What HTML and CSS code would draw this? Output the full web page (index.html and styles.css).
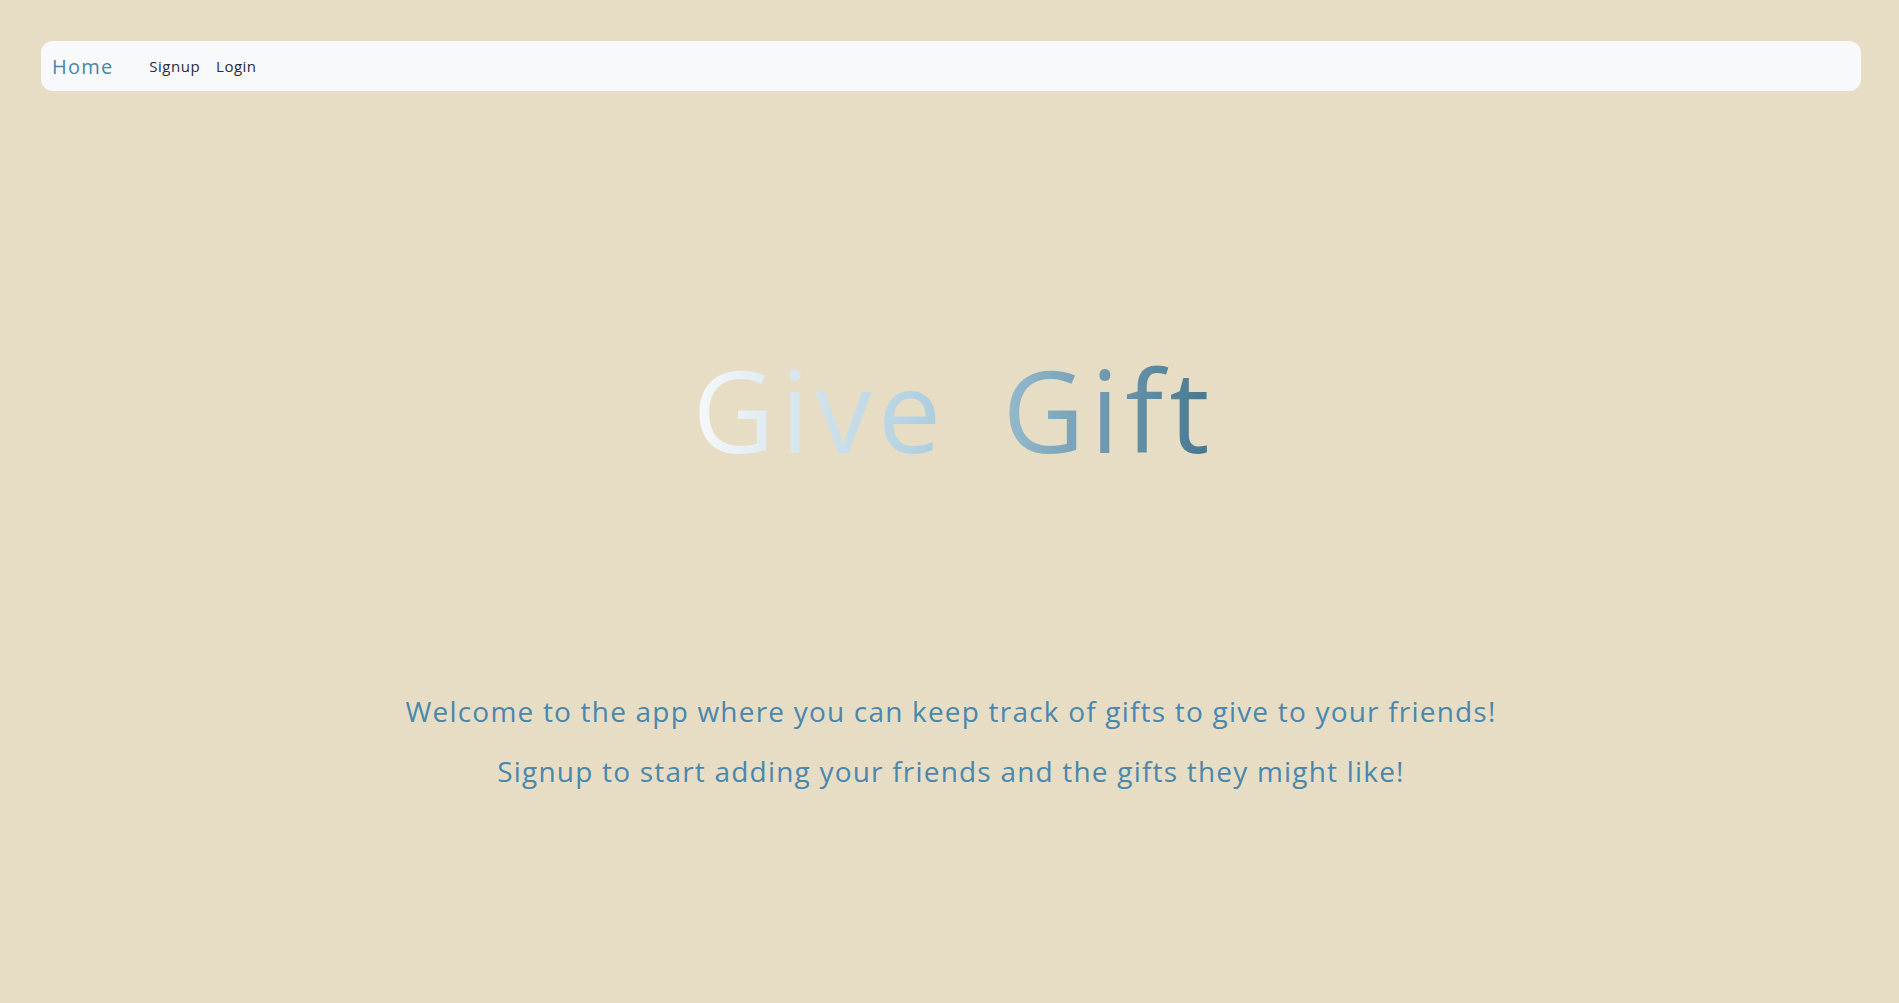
FILE: index.html
```html
<!DOCTYPE html>
<html lang="en">
<head>
<meta charset="utf-8">
<title>Give Gift</title>
<link rel="stylesheet" href="styles.css">
</head>
<body>
  <div class="page">
    <nav class="navbar">
      <a class="brand" href="#">Home</a>
      <ul class="nav-links">
        <li><a class="nav-link" href="#">Signup</a></li>
        <li><a class="nav-link" href="#">Login</a></li>
      </ul>
    </nav>
    <main class="hero">
      <h1 class="title">Give Gift</h1>
      <div class="intro">
        <p class="lead">Welcome to the app where you can keep track of gifts to give to your friends!</p>
        <p class="lead">Signup to start adding your friends and the gifts they might like!</p>
      </div>
    </main>
  </div>
</body>
</html>
```

FILE: styles.css
```css
* { box-sizing: border-box; }

html, body {
  margin: 0;
  padding: 0;
  background: #e7ddc5;
  font-family: "Open Sans", "DejaVu Sans", sans-serif;
}

.page {
  min-height: 1003px;
  padding: 41px 38px 0 41px;
}

.navbar {
  display: flex;
  align-items: center;
  height: 50px;
  padding: 0 11px;
  background: #f8f9fa;
  border-radius: 12px;
}

.brand {
  font-size: 20px;
  letter-spacing: 1.2px;
  color: #4a86a8;
  text-decoration: none;
  margin-right: 28px;
}

.nav-links {
  display: flex;
  list-style: none;
  margin: 0;
  padding: 0;
}

.nav-link {
  display: block;
  padding: 0 8px;
  font-size: 15px;
  letter-spacing: 0.5px;
  color: #2b2a3b;
  text-decoration: none;
}

.hero {
  display: flex;
  flex-direction: column;
  align-items: center;
}

.title {
  display: inline-block;
  margin: 262px 0 0 0;
  padding-left: 6px;
  font-size: 113px;
  font-weight: 400;
  line-height: 1;
  letter-spacing: 6px;
  word-spacing: 20px;
  background: linear-gradient(to right, #f8fafb 0%, #a8cbdc 50%, #45768f 100%);
  -webkit-background-clip: text;
  background-clip: text;
  color: transparent;
}

.intro {
  display: flex;
  flex-direction: column;
  align-items: center;
  gap: 26px;
  margin-top: 229px;
}

.lead {
  margin: 0;
  font-size: 28px;
  line-height: 1.2;
  letter-spacing: 1.2px;
  color: #4a87ad;
}
```
